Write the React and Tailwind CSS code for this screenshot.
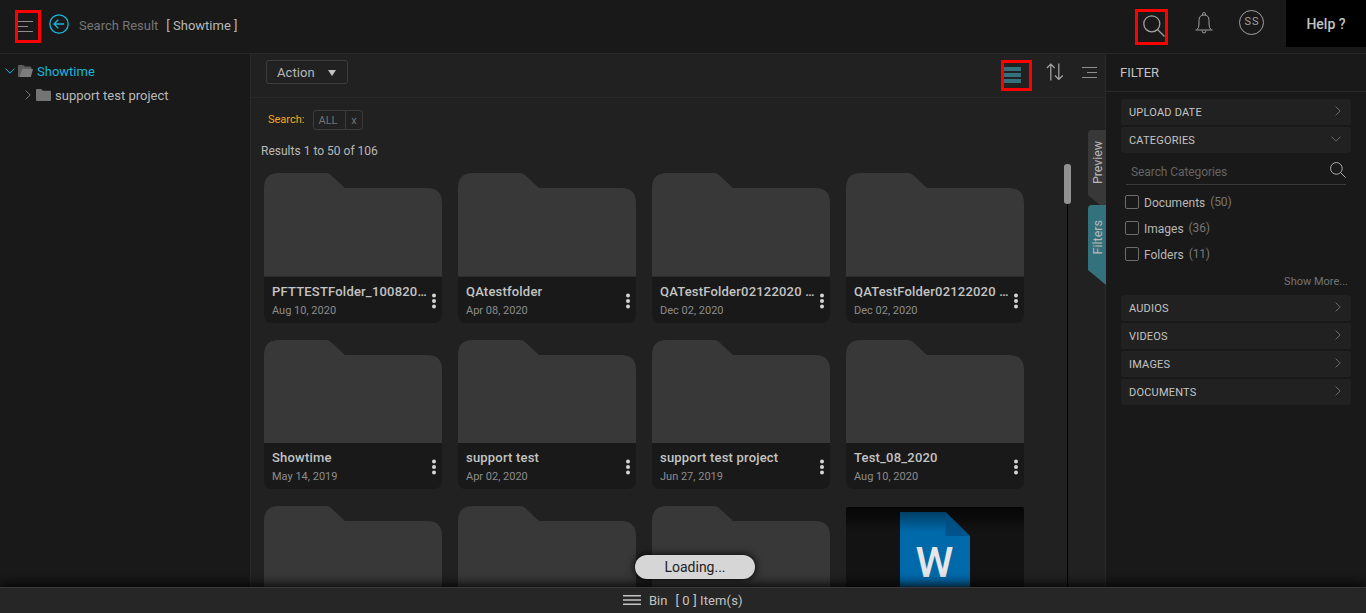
import React from "react";

const folders = [
  ["PFTTESTFolder_100820…", "Aug 10, 2020"],
  ["QAtestfolder", "Apr 08, 2020"],
  ["QATestFolder02122020 …", "Dec 02, 2020"],
  ["QATestFolder02122020 …", "Dec 02, 2020"],
  ["Showtime", "May 14, 2019"],
  ["support test", "Apr 02, 2020"],
  ["support test project", "Jun 27, 2019"],
  ["Test_08_2020", "Aug 10, 2020"],
];

function SearchIcon({ className }) {
  return (
    <svg className={className} viewBox="0 0 22 22" fill="none" stroke="currentColor" strokeWidth="1.3">
      <circle cx="8.8" cy="8.8" r="8" />
      <path d="M14.5 14.5 21.5 21.5" />
    </svg>
  );
}

function Chevron({ className }) {
  return (
    <svg className={className} viewBox="0 0 6 10" fill="none" stroke="currentColor" strokeWidth="1">
      <path d="M.6.6 5.2 5 .6 9.4" />
    </svg>
  );
}

function ChevronDown({ className }) {
  return (
    <svg className={className} viewBox="0 0 10 6" fill="none" stroke="currentColor" strokeWidth="1">
      <path d="M.5.6 5 5.2 9.5.6" />
    </svg>
  );
}

function FolderShape() {
  return (
    <svg className="block h-[103.6px] w-[178px] shrink-0" viewBox="0 0 178 104" preserveAspectRatio="none">
      <path d="M0 104V15Q0 0 15 0H62Q65 0 67 2L81 15H163Q178 15 178 30V104Z" fill="#383838" />
    </svg>
  );
}

function FolderCard({ name, date }) {
  return (
    <div className="h-[149.3px] w-[178px] overflow-hidden">
      <FolderShape />
      <div className="flex h-[45.7px] rounded-b-[8px] bg-[#191919] pl-2">
        <div className="w-[158px] pt-[7px]">
          <div className="whitespace-nowrap text-[13px] leading-[16px] font-medium tracking-[0.2px] text-[#c4c4c4]">{name}</div>
          <div className="mt-1 whitespace-nowrap text-[11px] leading-[14px] text-[#8c8c8c]">{date}</div>
        </div>
        <svg className="mt-[16px] h-4 w-[6px]" viewBox="0 0 6 16" fill="#d4d4d4">
          <circle cx="4" cy="2.4" r="2" />
          <circle cx="4" cy="8" r="2" />
          <circle cx="4" cy="13.5" r="2" />
        </svg>
      </div>
    </div>
  );
}

function WordCard() {
  return (
    <div className="mt-px flex h-[104px] w-[178px] justify-center overflow-hidden rounded-[2px] bg-linear-to-b from-[#060606] to-[#131313] to-[24px] pt-[5px]">
      <svg className="h-[90px] w-[70px]" viewBox="0 0 70 90">
        <defs>
          <linearGradient id="doc" x1="0" y1="0" x2="0" y2="90" gradientUnits="userSpaceOnUse">
            <stop offset="0" stopColor="#003f65" />
            <stop offset=".22" stopColor="#0069aa" />
            <stop offset="1" stopColor="#0069aa" />
          </linearGradient>
        </defs>
        <path d="M0 0H45.500L70 24V90H0Z" fill="url(#doc)" />
        <path d="M45.500 0 70 24H45.500Z" fill="#004c80" opacity=".75" />
        <text x="34.500" y="65" textAnchor="middle" fontFamily="Roboto, sans-serif" fontWeight="500" fontSize="43" fill="#e6e6e6">W</text>
      </svg>
    </div>
  );
}

function Section({ label, open }) {
  return (
    <div className="flex h-[26px] w-[230px] items-center justify-between rounded-[3px] bg-[#212121] pr-[10px] pl-2">
      <span className="pt-[2px] text-[11px] leading-[14px] tracking-[0.2px] text-[#c4c4c4]">{label}</span>
      {open ? <ChevronDown className="mb-[2px] h-[6px] w-[10px] text-[#6c6c6c]" /> : <Chevron className="mb-[2px] h-[10px] w-[6px] text-[#6c6c6c]" />}
    </div>
  );
}

function Check({ label, count }) {
  return (
    <div className="flex h-[26px] items-center pl-[19px] text-[12px]">
      <span className="size-[14px] rounded-[2px] border border-[#6c6c6c]" />
      <span className="ml-[5px] pt-px text-[#b8b8b8]">{label}</span>
      <span className="ml-[5px] tracking-[-0.15px] text-[#777]">{count}</span>
    </div>
  );
}

export default function App() {
  return (
    <div className="relative flex h-[613px] w-[1366px] flex-col overflow-hidden bg-[#191919] font-[Roboto,sans-serif] text-[#b8b8b8]">
      <header className="flex h-[54px] shrink-0 items-start border-b border-[#292929] pl-[15px]">
        <div className="mt-[10px] h-[33px] w-[26px] border-3 border-[#ff0000] pt-[8px]">
          <svg className="h-[11px] w-[15px]" viewBox="0 0 15 11" stroke="#8f8f8f">
            <path d="M0 .5H15M0 5.500H10M0 10.500H15" />
          </svg>
        </div>
        <svg className="mt-[14px] ml-2 size-5" viewBox="0 0 20 20" fill="none" stroke="#18b5dc" strokeWidth="1.3">
          <circle cx="10" cy="10" r="9.200" />
          <path d="M15.200 10H5M9.300 5.700 5 10l4.300 4.300" />
        </svg>
        <span className="mt-[17px] ml-[10px] text-[13px] leading-[17px] text-[#767676]">Search Result</span>
        <span className="mt-[17px] ml-2 text-[13px] leading-[17px]">[ Showtime ]</span>
        <div className="ml-auto mt-[9px] h-9 w-[33px] border-3 border-[#ff0000] pt-[3px] pl-[5px]">
          <SearchIcon className="size-[22px] text-[#a0a0a0]" />
        </div>
        <svg className="mt-[12px] ml-[27px] h-[22px] w-[18px]" viewBox="0 0 18 22" fill="none" stroke="#a0a0a0" strokeWidth="1">
          <path d="M.5 18H17.500M2 17.500Q4 16 4 12V8.500Q4 3 9 3T14 8.500V12Q14 16 16 17.500M7.500 3V1.700Q7.500.6 9 .6T10.500 1.700V3M7 18.500Q7 21 9 21T11 18.500" />
        </svg>
        <div className="mt-[10px] ml-[26px] flex size-[25px] items-center justify-center rounded-full border border-[#a0a0a0] text-[11px] tracking-[1px] text-[#a0a0a0]">
          <span className="pl-px">SS</span>
        </div>
        <div className="ml-[22px] flex h-[47px] w-[80px] items-center justify-center bg-black pt-[2px] text-[14px] font-medium text-[#c4c4c4]">Help ?</div>
      </header>

      <div className="flex h-[533px] shrink-0">
        <aside className="w-[251px] shrink-0 border-r border-[#292929] pt-[6px] text-[13px]">
          <div className="flex h-6 items-center pl-[5px] text-[#18b5dc]">
            <ChevronDown className="mb-[3px] h-[6px] w-[10px]" />
            <svg className="mb-[2px] ml-[3px] h-3 w-[15px]" viewBox="0 0 15 12">
              <path d="M0 11.500V1Q0 0 1 0H5L7 1.500H12Q13.500 1.500 13.500 3V4H4L1.500 12H.5Z" fill="#5c5c5c" />
              <path d="M4 4H15L12.800 12H1.200Z" fill="#7c7c7c" />
            </svg>
            <span className="ml-1">Showtime</span>
          </div>
          <div className="flex h-6 items-center pl-[25px]">
            <Chevron className="mb-[3px] h-[10px] w-[6px] text-[#747474]" />
            <svg className="mb-[2px] ml-[5px] h-[12px] w-[15px]" viewBox="0 0 15 11" preserveAspectRatio="none" fill="#747474">
              <path d="M0 1Q0 0 1 0H5L7 1.500H14Q15 1.500 15 2.500V10Q15 11 14 11H1Q0 11 0 10Z" />
            </svg>
            <span className="ml-1">support test project</span>
          </div>
        </aside>

        <main className="relative w-[855px] shrink-0 border-r border-[#292929] bg-[#212121]">
          <div className="flex h-11 items-start border-b border-[#292929] pl-[15px]">
            <div className="mt-[6px] flex h-6 w-[82px] items-center rounded-[3px] border border-[#3c3c3c] pt-px pl-[10px] text-[13px] tracking-[0.1px]">
              Action
              <svg className="mt-px ml-[13px] h-[6px] w-2" viewBox="0 0 8 6" fill="#c4c4c4"><path d="M0 0H8L4 6Z" /></svg>
            </div>
            <div className="ml-auto mt-[6px] h-[31px] w-[31px] border-3 border-[#ff0000] pt-1">
              <svg className="h-4 w-[18px]" viewBox="0 0 18 16" fill="#33717c">
                <path d="M0 0H17V4H0ZM0 6H17V10H0ZM0 12H17V16H0Z" />
              </svg>
            </div>
            <svg className="mt-[9px] ml-[14px] h-[18px] w-[18px]" viewBox="0 0 18 18" fill="none" stroke="#a8a8a8" strokeWidth="1.200">
              <path d="M4.800 17.500V1.200M1 5 4.800 1 8.600 5M12.800.5V16.300M9 12.500 12.800 16.500 16.800 12.500" />
            </svg>
            <svg className="mt-[13px] mr-2 ml-[18px] h-[11px] w-[15px]" viewBox="0 0 15 11" stroke="#8f8f8f">
              <path d="M0 .5H15M5 5.500H15M0 10.500H15" />
            </svg>
          </div>
          <div className="flex h-[46px] items-start pt-3 pl-[17px]">
            <span className="mt-[2px] w-[45px] text-[11px] leading-[15px] text-[#f5a81c]">Search:</span>
            <div className="flex h-5 w-[50px] rounded-[3px] border border-[#3c3c3c] text-[11px] text-[#747474]">
              <span className="flex w-8 items-center justify-center border-r border-[#3c3c3c] pt-[2px] pr-[3px]">ALL</span>
              <span className="flex flex-1 items-center justify-center pt-[2px]">x</span>
            </div>
          </div>
          <div className="h-5 pl-[10px] text-[12px] leading-[14px] tracking-[0.01px]">Results 1 to 50 of 106</div>
          <div className="flex h-[423px] overflow-hidden">
            <div className="mt-[9.3px] ml-[13px] grid h-max w-[760px] grid-cols-[repeat(4,178px)] gap-x-4 gap-y-[17px]">
              {folders.map(([name, date], i) => <FolderCard key={i} name={name} date={date} />)}
              <FolderShape />
              <FolderShape />
              <FolderShape />
              <WordCard />
            </div>
            <div className="ml-auto mr-[34px] flex w-[7px] flex-col items-center">
              <div className="h-10 w-[7px] shrink-0 rounded-[3px] bg-[#929292]" />
              <div className="w-px flex-1 bg-black" />
            </div>
          </div>
          <div className="absolute top-[76px] -right-px flex flex-col text-[12.5px] text-[#b8b8b8]">
            <div className="flex h-[75px] w-[18px] justify-center rounded-tl-[4px] bg-[#383838] pt-[11px] [clip-path:polygon(0_0,100%_0,100%_100%,12px_100%,0_65px)]">
              <span className="h-max rotate-180 pr-px leading-[18px] tracking-[-0.1px] [writing-mode:vertical-rl]">Preview</span>
            </div>
            <div className="flex h-20 w-[18px] justify-center rounded-tl-[4px] bg-[#33717c] pt-[15px] [clip-path:polygon(0_0,100%_0,100%_100%,0_65px)]">
              <span className="h-max rotate-180 pr-px leading-[18px] [writing-mode:vertical-rl]">Filters</span>
            </div>
          </div>
        </main>

        <aside className="w-[260px] shrink-0">
          <div className="flex h-[38px] items-center border-b border-[#292929] pl-[14px] text-[13px] text-[#c4c4c4]">FILTER</div>
          <div className="mt-[7px] ml-[15px] flex flex-col gap-[2px]">
            <Section label="UPLOAD DATE" />
            <Section label="CATEGORIES" open />
          </div>
          <div className="ml-5 flex h-[32px] w-[220px] items-start justify-between border-b border-[#3a3a3a] pt-[9px] pl-[5px]">
            <span className="pt-[2px] text-[12px] leading-[16px] tracking-[-0.08px] text-[#646464]">Search Categories</span>
            <SearchIcon className="size-4 text-[#b4b4b4]" />
          </div>
          <div className="pt-1">
            <Check label="Documents" count="(50)" />
            <Check label="Images" count="(36)" />
            <Check label="Folders" count="(11)" />
          </div>
          <div className="flex h-[28px] items-center justify-end pt-[2px] pr-[18px] text-[11px] text-[#747474]">Show More...</div>
          <div className="ml-[15px] flex flex-col gap-[2px]">
            <Section label="AUDIOS" />
            <Section label="VIDEOS" />
            <Section label="IMAGES" />
            <Section label="DOCUMENTS" />
          </div>
        </aside>
      </div>

      <footer className="z-10 flex h-[26px] shrink-0 items-center border-t border-[#3a3a3a] bg-[#262626] pl-[623px] text-[13px] text-[#c4c4c4] shadow-[0_-2px_12px_#000]">
        <svg className="mb-px h-[10px] w-[18px]" viewBox="0 0 18 10" fill="#c4c4c4"><path d="M0 0H18V1.500H0ZM0 4.200H18V5.800H0ZM0 8.500H18V10H0Z" /></svg>
        <span className="ml-2">Bin</span>
        <span className="ml-2 tracking-[0.12px]">[ 0 ] Item(s)</span>
      </footer>
      <div className="absolute top-[555px] left-[635px] z-20 flex h-6 w-[120px] items-center justify-center rounded-full bg-[#d6d6d6] text-[14px] text-[#222] shadow-[0_0_8px_#000]">Loading...</div>
    </div>
  );
}
